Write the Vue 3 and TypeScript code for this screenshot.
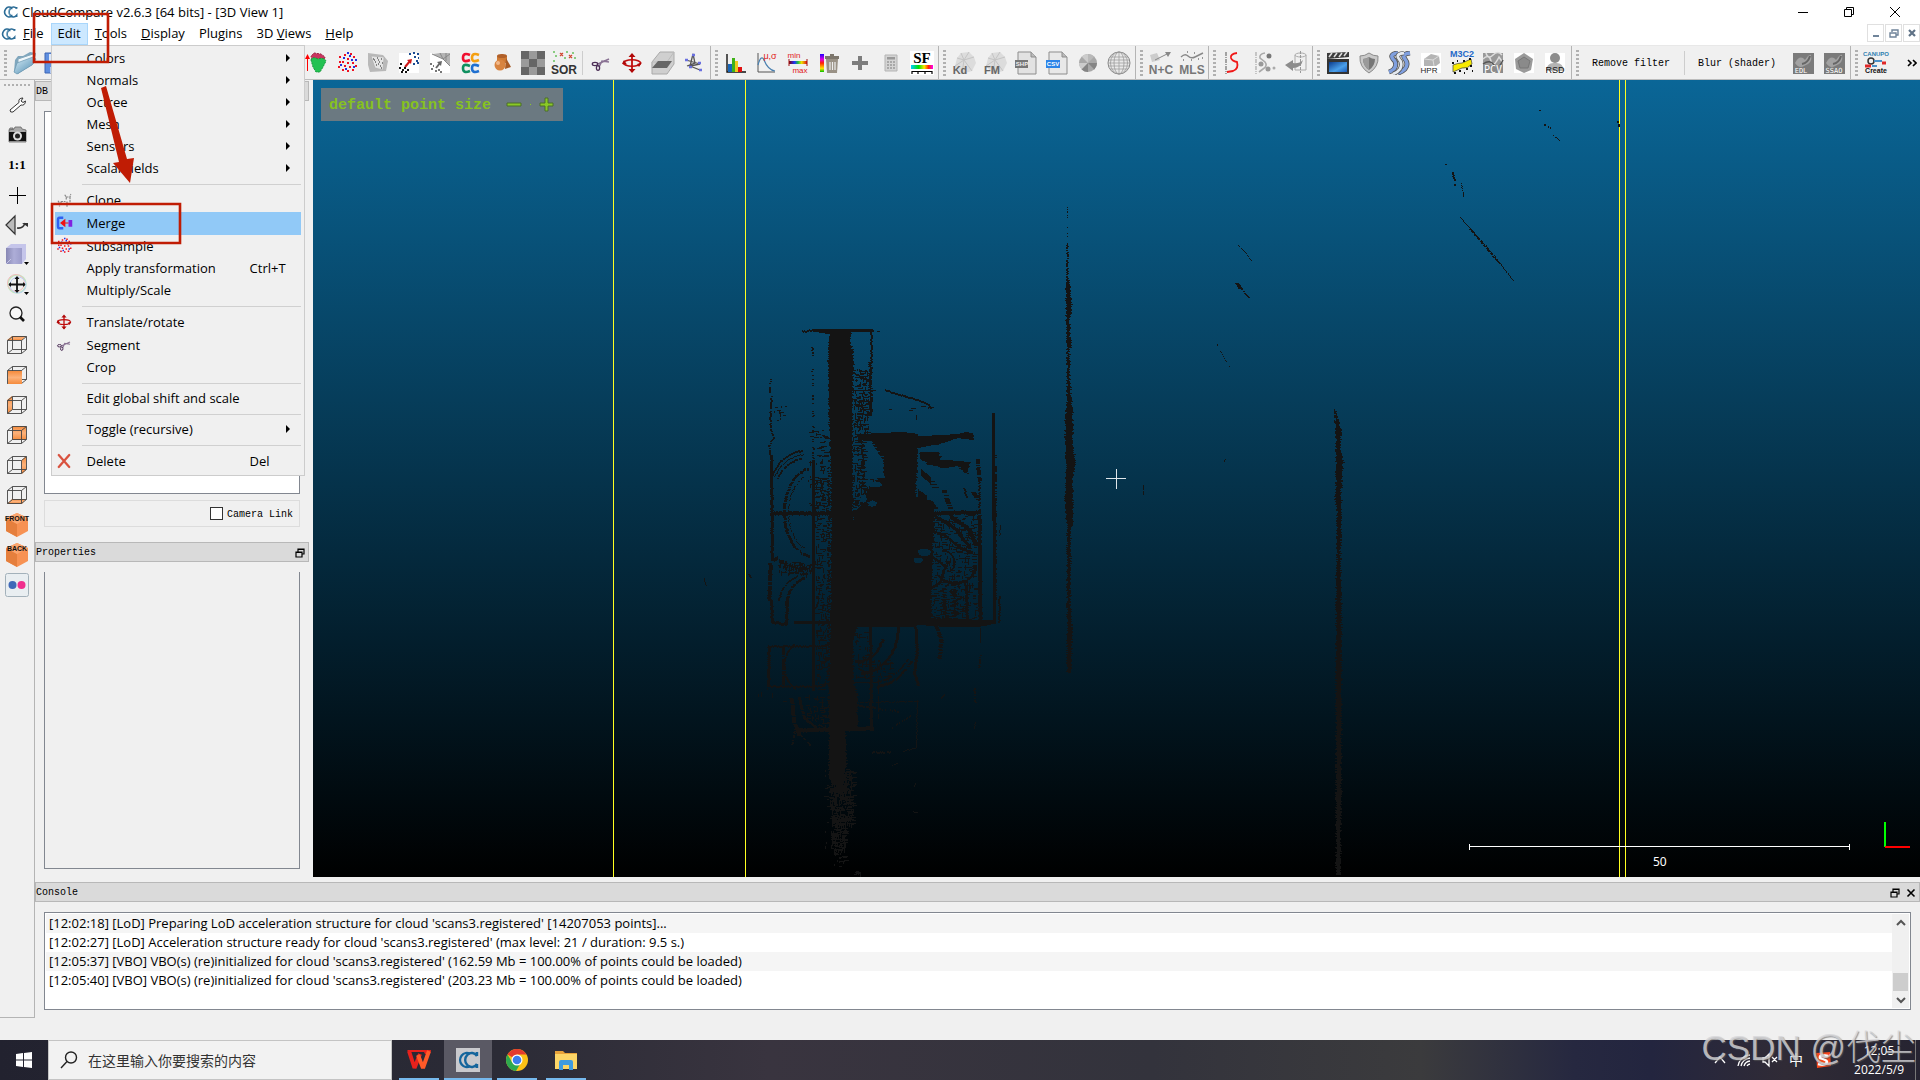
<script setup lang="ts">
interface MenuEntry {
  label?: string
  icon?: string
  shortcut?: string
  submenu?: boolean
  active?: boolean
}
interface ToolItem {
  icon?: string
  text?: string
  separator?: boolean
}
interface Caption {
  t: string
  x: number
  y: number
  size: number
  color: string
  kind?: 'serif' | 'mono' | 'thin'
}

const menus = [
  { key: 'F', rest: 'ile', before: '' },
  { key: '', rest: 'Edit', before: '' },
  { key: 'T', rest: 'ools', before: '' },
  { key: 'D', rest: 'isplay', before: '' },
  { key: '', rest: 'Plugins', before: '' },
  { key: 'V', rest: 'iews', before: '3D ' },
  { key: 'H', rest: 'elp', before: '' },
]

const editMenu: MenuEntry[] = [
  { label: 'Colors', submenu: true },
  { label: 'Normals', submenu: true },
  { label: 'Octree', submenu: true },
  { label: 'Mesh', submenu: true },
  { label: 'Sensors', submenu: true },
  { label: 'Scalar fields', submenu: true },
  {},
  { label: 'Clone', icon: 'clone' },
  { label: 'Merge', icon: 'merge', active: true },
  { label: 'Subsample', icon: 'subsample' },
  { label: 'Apply transformation', shortcut: 'Ctrl+T' },
  { label: 'Multiply/Scale' },
  {},
  { label: 'Translate/rotate', icon: 'translate' },
  { label: 'Segment', icon: 'scissors' },
  { label: 'Crop' },
  {},
  { label: 'Edit global shift and scale' },
  {},
  { label: 'Toggle (recursive)', submenu: true },
  {},
  { label: 'Delete', icon: 'delete', shortcut: 'Del' },
]

const icons = (...names: string[]): ToolItem[] =>
  names.map((n) => (n === '|' ? { separator: true } : { icon: n }))

const toolGroups: ToolItem[][] = [
  icons('open', 'save', '|', 'plus', 'delete', 'clone', '|', 'merge', 'subsample', 'mesh', 'align',
    'cone', 'subsample', 'mesh', 'align', 'distance', 'cccc', 'primitives', 'checker', 'sor', '|',
    'scissors', 'translate', 'section', 'polyline'),
  icons('histogram', 'gauss', 'minmax', 'sftrash', 'plus', 'calc', 'sf'),
  icons('kd', 'fm', 'shp', 'csv', 'pie', 'globe'),
  icons('nc', 'mls'),
  icons('scurve', 'spoints', 'unroll'),
  icons('movie', 'shield', 'srs', 'hpr', 'm3c2', 'pcv', 'pentagon', 'rsd'),
  [{ text: 'Remove filter' }, { separator: true }, { text: 'Blur (shader)' }, { icon: 'edl' }, { icon: 'ssao' }],
  icons('canupo'),
]

// Lettering drawn over the icons, centred on x with its baseline on y
const captions: Record<string, Caption[]> = {
  sor: [{ t: 'SOR', x: 12, y: 23, size: 12, color: '#333' }],
  gauss: [{ t: 'μ,σ', x: 15, y: 8, size: 9, color: '#e02020', kind: 'thin' }],
  minmax: [
    { t: 'min', x: 8, y: 7, size: 8, color: '#e02020', kind: 'thin' },
    { t: 'max', x: 14, y: 22, size: 8, color: '#e02020', kind: 'thin' },
  ],
  sf: [{ t: 'SF', x: 12, y: 12, size: 15, color: '#000', kind: 'serif' }],
  kd: [{ t: 'Kd', x: 8, y: 23, size: 11, color: '#666' }],
  fm: [{ t: 'FM', x: 9, y: 23, size: 11, color: '#666' }],
  shp: [{ t: 'SHP', x: 8, y: 15, size: 6, color: '#eee' }],
  csv: [{ t: 'CSV', x: 8, y: 15, size: 6, color: '#fff' }],
  nc: [{ t: 'N+C', x: 12, y: 23, size: 12, color: '#777' }],
  mls: [{ t: 'MLS', x: 12, y: 23, size: 12, color: '#777' }],
  hpr: [{ t: 'HPR', x: 10, y: 22, size: 8, color: '#222', kind: 'thin' }],
  m3c2: [{ t: 'M3C2', x: 12, y: 6, size: 9, color: '#2468c8' }],
  pcv: [{ t: 'PCV', x: 12, y: 22, size: 10, color: '#fff', kind: 'mono' }],
  rsd: [{ t: 'RSD', x: 12, y: 22, size: 9, color: '#111', kind: 'thin' }],
  edl: [{ t: 'EDL', x: 10, y: 22, size: 7, color: '#fff', kind: 'mono' }],
  ssao: [{ t: 'SSAO', x: 12, y: 22, size: 7, color: '#fff', kind: 'mono' }],
  canupo: [
    { t: 'CANUPO', x: 12, y: 5, size: 6, color: '#2f7fb0' },
    { t: 'Create', x: 12, y: 22, size: 7, color: '#111' },
  ],
  one: [{ t: '1:1', x: 12, y: 16, size: 13, color: '#000', kind: 'serif' }],
  front: [{ t: 'FRONT', x: 12, y: 8, size: 7, color: '#111' }],
  back: [{ t: 'BACK', x: 12, y: 8, size: 7, color: '#111' }],
}

const sideTools = [
  'wrench', 'camera', 'one', 'cross', 'view', 'cube', 'move', 'zoom',
  'v-top', 'v-front', 'v-left', 'v-back', 'v-right', 'v-bottom', 'front', 'back', 'stereo',
]

const logs = [
  "[12:02:18] [LoD] Preparing LoD acceleration structure for cloud 'scans3.registered' [14207053 points]...",
  "[12:02:27] [LoD] Acceleration structure ready for cloud 'scans3.registered' (max level: 21 / duration: 9.5 s.)",
  "[12:05:37] [VBO] VBO(s) (re)initialized for cloud 'scans3.registered' (162.59 Mb = 100.00% of points could be loaded)",
  "[12:05:40] [VBO] VBO(s) (re)initialized for cloud 'scans3.registered' (203.23 Mb = 100.00% of points could be loaded)",
]

const apps = ['wps', 'cc', 'chrome', 'explorer']

/* ---- Point cloud, rasterised to a bitmap and emitted as pixel runs ---- */
type Pt = [number, number]
const X0 = 690
const Y0 = 90
const W = 940
const H = 790
const grid = new Uint8Array(W * H)
let seed = 7
const rnd = () => {
  seed = (seed * 1103515245 + 12345) & 0x7fffffff
  return seed / 0x7fffffff
}
const plot = (x: number, y: number, v = 1) => {
  const px = Math.round(x) - X0
  const py = Math.round(y) - Y0
  if (px >= 0 && px < W && py >= 0 && py < H) grid[py * W + px] = v
}
function poly(pts: Pt[], jitter = 1) {
  const ys = pts.map((p) => p[1])
  for (let y = Math.min(...ys); y <= Math.max(...ys); y++) {
    const xs: number[] = []
    pts.forEach((a, i) => {
      const b = pts[(i + 1) % pts.length]
      const s = y + 0.4
      if (a[1] <= s !== b[1] <= s) xs.push(a[0] + ((s - a[1]) / (b[1] - a[1])) * (b[0] - a[0]))
    })
    xs.sort((a, b) => a - b)
    for (let i = 0; i + 1 < xs.length; i += 2) {
      const l = xs[i] + (rnd() - 0.5) * 2 * jitter
      const r = xs[i + 1] + (rnd() - 0.5) * 2 * jitter
      for (let x = l; x <= r; x++) plot(x, y)
    }
  }
}
function line(pts: Pt[], t = 1, density = 1, jitter = 0.5) {
  for (let i = 0; i + 1 < pts.length; i++) {
    const [ax, ay] = pts[i]
    const [bx, by] = pts[i + 1]
    const n = Math.max(Math.abs(bx - ax), Math.abs(by - ay), 1)
    const steep = Math.abs(by - ay) > Math.abs(bx - ax)
    for (let k = 0; k <= n; k++) {
      if (rnd() > density) continue
      const j = (rnd() - 0.5) * 2 * jitter
      for (let w = 0; w < t; w++) {
        const o = w - (t - 1) / 2 + j
        plot(ax + ((bx - ax) * k) / n + (steep ? o : 0), ay + ((by - ay) * k) / n + (steep ? 0 : o))
      }
    }
  }
}
function arc(cx: number, cy: number, rx: number, ry: number, from: number, to: number, t = 1, density = 1) {
  const pts: Pt[] = []
  for (let a = from; a <= to; a += 6) {
    const r = (a * Math.PI) / 180
    pts.push([cx + rx * Math.cos(r), cy + ry * Math.sin(r)])
  }
  line(pts, t, density)
}
function scatter(x0: number, y0: number, x1: number, y1: number, density: number) {
  const n = (x1 - x0) * (y1 - y0) * density * 0.4
  for (let i = 0; i < n; i++) {
    const x = x0 + rnd() * (x1 - x0)
    const y = y0 + rnd() * (y1 - y0)
    const len = 1 + rnd() * 4
    const vertical = rnd() > 0.6
    for (let k = 0; k < len; k++) plot(x + (vertical ? 0 : k), y + (vertical ? k : 0))
  }
}
function hole(cx: number, cy: number, rx: number, ry: number) {
  for (let y = -ry; y <= ry; y++) {
    const w = rx * Math.sqrt(1 - (y / ry) ** 2) + rnd() * 2 - 1
    for (let x = -w; x <= w; x++) plot(cx + x, cy + y, 0)
  }
}

// main shaft and roof
line([[802, 331], [815, 330]], 2)
poly([[812, 329], [873, 329], [873, 332], [851, 332], [830, 334], [815, 332]], 1)
line([[877, 331], [879, 331]])
poly([[830, 330], [851, 330], [850, 342], [853, 352], [852, 440], [853, 512], [855, 600], [857, 626], [853, 642], [853, 680], [857, 695], [857, 727], [829, 729], [829, 690], [831, 600], [831, 480], [829, 420], [828, 350]], 1)
poly([[829, 729], [845, 729], [846, 765], [838, 790], [829, 775]], 1)
scatter(829, 765, 846, 800, 0.7)
scatter(830, 770, 853, 825, 0.6)
scatter(831, 815, 845, 850, 0.8)
scatter(833, 850, 845, 866, 0.25)
scatter(824, 770, 832, 850, 0.08)
scatter(852, 871, 862, 874, 0.6)
line([[871, 332], [871, 362]], 2)
line([[870, 362], [870, 415]], 3, 1, 1)
scatter(853, 368, 870, 400, 0.3)
scatter(853, 398, 868, 438, 0.5)
line([[854, 390], [875, 390]], 1, 0.8)
line([[854, 373], [868, 380]], 2)
line([[885, 390], [905, 396], [927, 403], [931, 408]], 2)
scatter(880, 404, 932, 416, 0.03)

// left wing
line([[771, 378], [769, 392]], 2, 0.8)
line([[771, 396], [770, 425], [773, 438], [769, 445], [770, 455]], 2, 0.9)
scatter(771, 405, 785, 420, 0.12)
line([[771, 455], [772, 560]], 3)
line([[770, 563], [769, 600]], 4, 0.9)
line([[812, 344], [813, 460]], 2, 0.35)
scatter(808, 430, 825, 512, 0.16)
line([[813, 460], [813, 690]], 3)
scatter(815, 478, 830, 600, 0.26)
scatter(815, 600, 830, 690, 0.3)
line([[828, 460], [828, 700]], 2, 0.5)
arc(812, 512, 28, 44, 96, 264, 3, 0.9)
arc(812, 512, 24, 38, 110, 250, 1, 0.7)
arc(806, 494, 38, 44, 206, 266, 2)
arc(806, 494, 35, 40, 206, 266, 1)
arc(806, 494, 32, 36, 206, 266, 2, 0.8)
line([[771, 513], [855, 513]], 4)
line([[772, 557], [790, 566], [812, 570]], 4, 0.8, 2)
scatter(778, 562, 812, 574, 0.4)
arc(812, 606, 34, 34, 190, 262, 2, 0.8)
arc(812, 606, 26, 30, 180, 262, 3, 0.8)
line([[771, 600], [772, 622], [786, 624], [787, 600]], 3)
line([[794, 622], [830, 622]], 3)
line([[768, 646], [825, 646]], 2)
line([[769, 646], [768, 686]], 3)
line([[768, 686], [822, 686]], 2)
arc(806, 666, 22, 26, 120, 240, 2, 0.9)
line([[783, 646], [783, 684]], 3, 0.8)
line([[791, 697], [794, 722], [799, 735]], 4, 0.9)
line([[799, 697], [804, 718], [818, 729]], 3, 0.9)
arc(835, 690, 30, 40, 110, 160, 1, 0.6)
line([[796, 730], [873, 728]], 4)
line([[795, 728], [792, 744]], 2, 0.7)
line([[800, 734], [810, 745]], 2, 0.7)
scatter(804, 695, 829, 725, 0.16)
scatter(748, 685, 790, 702, 0.02)

// central block
poly([[858, 434], [900, 432], [915, 433], [918, 436], [940, 435], [957, 434], [966, 432], [973, 433], [974, 440], [957, 438], [940, 444], [917, 448], [917, 470], [915, 496], [926, 500], [934, 512], [931, 600], [932, 620], [914, 627], [853, 627], [853, 512], [862, 505], [872, 482], [884, 478], [883, 456], [872, 441], [858, 440]], 1)
scatter(853, 436, 864, 512, 0.5)
scatter(860, 478, 884, 512, 0.5)
hole(872, 503, 4, 3)
hole(863, 498, 3, 4)
hole(875, 484, 6, 3)
hole(924, 552, 6, 4)
hole(918, 560, 4, 3)
line([[871, 440], [884, 460]], 3, 0.7)
poly([[920, 452], [939, 452], [941, 458], [921, 461]], 1)
poly([[924, 458], [970, 462], [967, 475], [958, 466], [944, 468], [925, 464]], 2)
line([[921, 472], [930, 480], [936, 488]], 7, 0.9)
line([[918, 494], [926, 500], [933, 508]], 10, 0.9)
line([[944, 490], [950, 508]], 5, 0.8)
line([[964, 488], [966, 497]], 2)
line([[973, 492], [979, 501]], 5, 0.8)
line([[977, 457], [979, 480]], 4, 0.7)
line([[979, 480], [979, 512]], 2, 0.7)
line([[925, 513], [980, 512]], 4)
line([[979, 515], [980, 622]], 4)
scatter(932, 515, 976, 545, 0.22)
scatter(932, 545, 976, 620, 0.2)
line([[935, 516], [955, 528], [970, 548]], 4)
line([[950, 516], [968, 528], [976, 545]], 5)
line([[931, 530], [945, 535], [960, 548], [972, 552]], 3)
arc(955, 565, 20, 18, 0, 150, 3)
arc(942, 562, 12, 12, 270, 400, 2)
line([[932, 556], [945, 566], [940, 582], [930, 588]], 3)
line([[942, 590], [946, 620]], 4, 0.9, 2)
line([[953, 588], [955, 618]], 5, 0.8, 2)
line([[966, 586], [967, 620]], 3)
poly([[918, 618], [995, 620], [995, 624], [978, 627], [948, 627], [918, 625]], 2)
line([[993, 413], [993, 520]], 3, 1, 0.5)
line([[995, 455], [995, 600]], 3, 0.5)
line([[994, 500], [994, 623]], 3)
line([[1000, 525], [999, 535]], 1)
line([[999, 596], [999, 622]], 2)

// lower rings
line([[870, 627], [871, 728]], 3)
arc(860, 627, 38, 46, 0, 90, 3)
arc(858, 627, 26, 34, 20, 100, 3)
arc(866, 634, 52, 54, 30, 78, 3, 0.9)
arc(866, 634, 48, 49, 30, 80, 2, 0.8)
scatter(855, 660, 890, 678, 0.3)
scatter(855, 630, 870, 660, 0.15)
line([[915, 627], [917, 650], [914, 672], [918, 685]], 3)
line([[917, 700], [916, 747], [903, 751]], 1)
line([[872, 752], [890, 752]], 2, 0.8)
line([[857, 702], [918, 701]], 1, 0.7)
line([[857, 705], [898, 711]], 2, 0.7)
line([[878, 678], [878, 718]], 1, 0.8)
line([[854, 682], [878, 682]], 1)
line([[892, 727], [910, 716]], 2, 0.6)
line([[936, 625], [941, 640], [939, 658]], 4, 0.8)
line([[980, 628], [980, 642]], 1)
line([[980, 655], [979, 668]], 2, 0.6)
line([[974, 688], [975, 702]], 2, 0.6)
line([[975, 722], [974, 728]], 1)
line([[941, 697], [944, 695]], 2)
line([[887, 768], [897, 763]], 1, 0.5)
line([[914, 786], [915, 783]], 1)
line([[913, 811], [917, 812]], 1)

// detached walls
line([[1067, 207], [1067, 250]], 1, 0.35)
line([[1067, 245], [1067, 300]], 2, 0.85, 1)
poly([[1066, 280], [1069, 280], [1071, 300], [1071, 317], [1069, 318], [1070, 335], [1071, 346], [1069, 350], [1070, 385], [1072, 412], [1073, 430], [1072, 440], [1075, 460], [1072, 480], [1073, 512], [1072, 526], [1070, 530], [1070, 600], [1072, 640], [1071, 673], [1067, 673], [1067, 600], [1067, 526], [1065, 500], [1066, 470], [1065, 420], [1067, 400], [1067, 350], [1066, 317]], 1)
line([[1334, 409], [1334, 426]], 1, 0.6)
poly([[1335, 411], [1338, 420], [1341, 432], [1340, 450], [1343, 462], [1341, 490], [1341, 540], [1340, 548], [1341, 600], [1341, 700], [1341, 780], [1340, 875], [1336, 875], [1336, 780], [1336, 700], [1336, 600], [1337, 548], [1337, 510], [1335, 500], [1336, 480], [1336, 430]], 1)

// stray returns
line([[1460, 217], [1487, 247], [1513, 280]], 1, 1)
line([[1470, 229], [1500, 264]], 2, 0.8)
line([[1452, 171], [1455, 185]], 2, 0.8)
line([[1461, 183], [1463, 196]], 1, 0.8)
line([[1445, 164], [1446, 164]])
line([[1544, 124], [1552, 128]], 2, 0.6)
line([[1553, 135], [1559, 140]], 1, 0.7)
line([[1539, 110], [1540, 110]])
line([[1617, 120], [1619, 126]], 2, 0.8)
line([[1238, 245], [1246, 253], [1251, 260]], 1, 0.9)
line([[1237, 283], [1240, 288]], 4, 0.9)
line([[1240, 287], [1248, 297]], 2, 0.7)
line([[1217, 344], [1229, 366]], 1, 0.15)
line([[1143, 485], [1143, 494]], 1, 0.8)
line([[1224, 461], [1225, 459]], 1)
line([[749, 574], [750, 577]], 2)
line([[704, 578], [706, 585]], 1)

let cloud = ''
for (let y = 0; y < H; y++) {
  for (let x = 0; x < W; x++) {
    if (!grid[y * W + x]) continue
    const start = x
    while (x < W && grid[y * W + x]) x++
    cloud += `M${start + X0} ${y + Y0}h${x - start}v1h${start - x}z`
  }
}
</script>

<template>
  <div class="desktop">
    <svg class="defs" aria-hidden="true">
      <defs>
        <linearGradient id="g-blue" x1="0" y1="0" x2="1" y2="1"><stop offset="0" stop-color="#d8eef8" /><stop offset="1" stop-color="#4a87ad" /></linearGradient>
        <linearGradient id="g-scr" x1="0" y1="0" x2="1" y2="1"><stop offset="0" stop-color="#0b3b8c" /><stop offset="0.6" stop-color="#4aa0ea" /><stop offset="1" stop-color="#1a5ab8" /></linearGradient>
        <linearGradient id="g-rain"><stop offset="0" stop-color="#00d0ff" /><stop offset="0.35" stop-color="#00e000" /><stop offset="0.6" stop-color="#ffe600" /><stop offset="0.8" stop-color="#ff2000" /><stop offset="1" stop-color="#ff00ff" /></linearGradient>
        <linearGradient id="g-rainv" x1="0" y1="0" x2="0" y2="1"><stop offset="0" stop-color="#2000ff" /><stop offset="0.3" stop-color="#e000e0" /><stop offset="0.5" stop-color="#ff2000" /><stop offset="0.8" stop-color="#ffe600" /><stop offset="1" stop-color="#00c000" /></linearGradient>
        <linearGradient id="g-heat"><stop offset="0" stop-color="#800000" /><stop offset="0.3" stop-color="#2030ff" /><stop offset="0.5" stop-color="#20c040" /><stop offset="0.7" stop-color="#f0e000" /><stop offset="1" stop-color="#e01010" /></linearGradient>
        <linearGradient id="g-cube"><stop offset="0" stop-color="#7c7caa" /><stop offset="0.5" stop-color="#a9a9d4" /><stop offset="1" stop-color="#9494c4" /></linearGradient>
        <linearGradient id="g-face" x1="0" y1="0" x2="0" y2="1"><stop offset="0" stop-color="#f58b3c" /><stop offset="0.5" stop-color="#fbb17a" /><stop offset="1" stop-color="#f58b3c" /></linearGradient>
      </defs>
      <symbol id="i-ccmark" viewBox="0 0 24 24"><g fill="none" stroke="#2b6c96" stroke-width="2.4"><path d="M14.500 6A6.500 7.500 0 1 0 14.500 18" /><path d="M22 7V4.500M22 7A6.500 7.500 0 1 0 22 17V19.500M14.500 4V8M14.500 16V20" /></g><path d="M12.500 6A7 8 0 0 0 12.500 18" fill="none" stroke="#9cc4da" stroke-width="1" /></symbol>
      <symbol id="i-open" viewBox="0 0 24 24"><path d="M2 9L5 5L10 5L17 1L23 2L21 12L5 23L1 21Z" fill="#7fa6bd" /><path d="M5 8L20 3L22 3L20 13L5 22Z" fill="#eef6fa" stroke="#86a8bb" /><path d="M4 12L20 6L23 8L19 14L4 23L1 21Z" fill="url(#g-blue)" stroke="#6c98b2" stroke-width=".7" /></symbol>
      <symbol id="i-save" viewBox="0 0 24 24"><path d="M1 2H22V22H1Z" fill="#5f8fe0" stroke="#3c64b4" /><path d="M5 3H18V12H5Z" fill="#dce8fa" /><path d="M6 16H17V22H6Z" fill="#b5caf0" /></symbol>
      <symbol id="i-cone" viewBox="0 0 24 24"><path d="M3.500 20V5" stroke="red" /><path d="M1 8L3.500 3L6 8Z" fill="red" /><path d="M10 2L17 3L21 6L20 9H8L7 5Z" fill="#c9355f" stroke="#a02848" stroke-dasharray="2 1" /><path d="M7 9Q8 5 14 8Q20 6 22 10L19 16L16 21H12L9 16Z" fill="#23c152" stroke="#159a3b" stroke-dasharray="2 1" /></symbol>
      <symbol id="i-subsample" viewBox="0 0 24 24"><path d="M4 6h2M9 4h2M12 8h2M18 6h2M7 11h2M12 12h2M3 16h2M9 15h2M17 12h2M14 16h2M7 19h2M12 20h2M17 19h2M20 15h2M4 11h2M15 3h2" stroke="#f01020" stroke-width="2" /><path d="M8 7h2M14 5h2M20 9h2M10 18h2M18 16h2M5 14h2M16 9h2M12 2h2" stroke="#2430e0" stroke-width="2" /></symbol>
      <symbol id="i-mesh" viewBox="0 0 24 24"><path d="M2 2L17 4L22 10L20 20L4 21L2 14Z" fill="#b9b9b9" /><path d="M5 5L18 6L17 19L9 17Z" fill="#e4e4e4" stroke="#aaa" stroke-width=".6" /><path d="M7 8h1M11 7h1M15 8h1M9 11h1M13 11h1M16 12h1M10 14h1M14 15h1M8 9h1M12 13h1M15 17h1M12 9h1" stroke="#222" stroke-width="1.200" /></symbol>
      <symbol id="i-align" viewBox="0 0 24 24"><path d="M2 2H22V22H2Z" fill="#fff" /><path d="M8 16L13 10" stroke="#d01818" stroke-width="2" /><path d="M10 9L15 8L14 13Z" fill="#d01818" /><path d="M12 3h2M16 2h2M20 3h2M17 6h2M21 7h1M19 10h2M16 13h2M20 12h2" stroke="#1b4a90" stroke-width="2" /><path d="M3 13h2M2 17h2M5 19h2M8 21h2M4 21h2M7 17h2M10 19h2" stroke="#111" stroke-width="2" /></symbol>
      <symbol id="i-distance" viewBox="0 0 24 24"><path d="M2 2H22V22H2Z" fill="#fff" /><path d="M4 3L12 2H22V15L15 8Z" fill="#b4b4b4" /><path d="M4 3L15 8L22 15M12 2L15 8L22 3M18 2V10" stroke="#888" fill="none" /><path d="M8 17L12 12" stroke="#666" stroke-width="2" /><path d="M9 11L14 10L13 15Z" fill="#666" /><path d="M2 13h2M3 18h2M7 20h2M5 15h1M10 19h2M12 21h2" stroke="#777" stroke-width="2" /></symbol>
      <symbol id="i-cccc" viewBox="0 0 24 24"><g fill="none" stroke-width="2.600"><path d="M11 4Q4 1 4 7Q4 12 11 9" stroke="#f01030" /><path d="M20 4Q13 1 13 7Q13 12 20 9" stroke="#f5a010" /><path d="M11 15Q4 12 4 17Q4 23 11 20" stroke="#0f9060" /><path d="M20 15Q13 12 13 17Q13 23 20 20" stroke="#2070d0" /></g></symbol>
      <symbol id="i-primitives" viewBox="0 0 24 24"><path d="M7 5L12 3L17 5V12H7Z" fill="#cf7a34" /><ellipse cx="12" cy="5" rx="5" ry="2" fill="#b0602a" /><path d="M16 7L21 16L15 18Z" fill="#a85a24" /><circle cx="10" cy="14" r="5.500" fill="#d88440" /><circle cx="8" cy="12" r="2" fill="#f3b888" /></symbol>
      <symbol id="i-checker" viewBox="0 0 24 24"><path d="M0 0H24V24H0Z" fill="#9a9a9a" /><path d="M0 0H8V8H0ZM16 0H24V8H16ZM8 8H16V16H8ZM0 16H8V24H0ZM16 16H24V24H16Z" fill="#666" /></symbol>
      <symbol id="i-sor" viewBox="0 0 24 24"><path d="M1 1h2M14 1h2M20 2h2M3 5h2M12 7h2M22 7h2M1 10h2" stroke="#67c05c" stroke-width="1.600" /><path d="M8 2l3 3m0-3l-3 3M17 4l3 3m0-3l-3 3" stroke="#cf4a33" stroke-width="1.300" /></symbol>
      <symbol id="i-scissors" viewBox="0 0 24 24"><path d="M9 13L20 8M10 16L13 10L20 11" stroke="#8a7394" stroke-width="1.600" fill="none" /><ellipse cx="6" cy="13" rx="2.700" ry="1.600" fill="none" stroke="#4b2d55" stroke-width="1.300" /><ellipse cx="9" cy="17" rx="1.600" ry="2.300" fill="none" stroke="#4b2d55" stroke-width="1.300" /></symbol>
      <symbol id="i-translate" viewBox="0 0 24 24"><ellipse cx="12" cy="12" rx="8.500" ry="3.300" fill="none" stroke="#c00c0c" stroke-width="1.600" /><path d="M12 4V21" stroke="#c00c0c" stroke-width="1.800" /><path d="M8.500 6L12 2L15.500 6ZM8.500 18L12 22L15.500 18ZM4 9L2 13L7 13.500ZM17 13L22 11.500L19 16Z" fill="#b00808" /></symbol>
      <symbol id="i-section" viewBox="0 0 24 24"><path d="M1 11L9 1H23V13L16 23H1Z" fill="#cfcfcf" stroke="#aaa" /><path d="M1 17V11H16L23 1" fill="none" stroke="#bbb" /><path d="M1 17L7 10H21L16 17Z" fill="#666" /></symbol>
      <symbol id="i-polyline" viewBox="0 0 24 24"><path d="M4 9L18 13L8 15L18 19M8 15L11 3L13 12L5 15" fill="none" stroke="#555" stroke-width="1.300" /><path d="M3 9h3M10 4h3M16 12h3M17 19h3M7 16h3" stroke="#6a70e0" stroke-width="2.600" /></symbol>
      <symbol id="i-histogram" viewBox="0 0 24 24"><path d="M3 3V21H22" fill="none" stroke="#111" stroke-width="1.400" /><path d="M4 13H8V21H4Z" fill="#1765b8" /><path d="M8 7H11V21H8Z" fill="#3fb218" /><path d="M11 10H14V21H11Z" fill="#f0c81c" /><path d="M14 16H18V21H14Z" fill="#e01010" /></symbol>
      <symbol id="i-gauss" viewBox="0 0 24 24"><path d="M3 2V21H20" fill="none" stroke="#555" /><path d="M3 14Q6 3 9 9Q13 19 20 20" fill="none" stroke="#4a80b0" stroke-width="1.200" /></symbol>
      <symbol id="i-minmax" viewBox="0 0 24 24"><path d="M3 10h18v3H3Z" fill="url(#g-heat)" /><path d="M3 8v7M21 8v7" stroke="#a01010" /></symbol>
      <symbol id="i-sftrash" viewBox="0 0 24 24"><path d="M3 3H7V21H3Z" fill="url(#g-rainv)" /><path d="M9 8H21L20 22H10Z" fill="#9a9286" /><path d="M8 5H22V8H8Z" fill="#7d766c" /><path d="M13 3H17V5H13Z" fill="#7d766c" /><path d="M13 11V19M15.500 11V19M18 11V19" stroke="#eee" stroke-width="1.200" /></symbol>
      <symbol id="i-plus" viewBox="0 0 24 24"><path d="M12 5V19M4 12H20" stroke="#7d7d7d" stroke-width="4" /></symbol>
      <symbol id="i-calc" viewBox="0 0 24 24"><path d="M6 4H18V20H6Z" fill="#d4d4d4" stroke="#b4b4b4" /><path d="M8 6H16V8.500H8Z" fill="#999" /><path d="M8 11h8M8 14h8M8 17h8" stroke="#999" stroke-width="1.600" stroke-dasharray="2 1" /></symbol>
      <symbol id="i-sf" viewBox="0 0 24 24"><path d="M0 0H24V24H0Z" fill="#fff" /><path d="M1 14H23V18H1Z" fill="url(#g-rain)" /><path d="M2 23V20.500H22V23M8 20V23M15 20V23" fill="none" stroke="#000" stroke-width="1.200" /></symbol>
      <symbol id="i-rock" viewBox="0 0 24 24"><path d="M5 7L9 2L17 1L22 6L24 12L20 20L10 23L3 15Z" fill="#dcdcdc" /><path d="M5 7L12 9L17 1M12 9L10 23M12 9L22 6M12 9L20 20M3 15L12 9M9 2L12 9" fill="none" stroke="#c4c4c4" /></symbol>
      <symbol id="i-shp" viewBox="0 0 24 24"><path d="M4 1H17L22 6V23H4Z" fill="#e2e2e2" stroke="#8d8d8d" /><path d="M17 1V6H22" fill="#bbb" stroke="#8d8d8d" /><path d="M1 9H14V17H1Z" fill="#777" /></symbol>
      <symbol id="i-csv" viewBox="0 0 24 24"><path d="M4 1H17L22 6V23H4Z" fill="#e8e8e8" stroke="#8d8d8d" /><path d="M17 1V6H22" fill="#bbb" stroke="#8d8d8d" /><path d="M1 9H15V17H1Z" fill="#2d84e8" /></symbol>
      <symbol id="i-pie" viewBox="0 0 24 24"><circle cx="12" cy="12" r="9" fill="#a8a8a8" /><path d="M12 12L12 3A9 9 0 0 0 5.600 5.600ZM12 12L3 12A9 9 0 0 0 5.600 18.400Z" fill="#ccc" /><path d="M12 12L21 12A9 9 0 0 1 18.400 18.400ZM12 12V21A9 9 0 0 1 5.600 18.400Z" fill="#858585" /><path d="M12 12L18.400 5.600A9 9 0 0 0 12 3Z" fill="#b9b9b9" /></symbol>
      <symbol id="i-globe" viewBox="0 0 24 24"><circle cx="12" cy="12" r="11" fill="#e9e9e9" stroke="#888" /><path d="M1 12H23M12 1V23M3 6H21M3 18H21M2 9H22M2 15H22" stroke="#999" stroke-width=".7" /><ellipse cx="12" cy="12" rx="5" ry="11" fill="none" stroke="#999" stroke-width=".8" /><ellipse cx="12" cy="12" rx="8.500" ry="11" fill="none" stroke="#999" stroke-width=".8" /></symbol>
      <symbol id="i-nc" viewBox="0 0 24 24"><path d="M1 4L8 2L11 9L3 11Z" fill="#ccc" /><path d="M6 9L18 3" stroke="#888" /><path d="M16 1L22 1L19 6Z" fill="#888" /></symbol>
      <symbol id="i-mls" viewBox="0 0 24 24"><path d="M1 6Q5 2 8 5T15 6T23 2" fill="none" stroke="#888" stroke-width="1.400" /><path d="M3 9h1M7 1h1M11 9h1M18 8h1M22 7h1M14 2h1" stroke="#777" stroke-width="1.500" /></symbol>
      <symbol id="i-scurve" viewBox="0 0 24 24"><path d="M4 1V23" stroke="#555" stroke-dasharray="4 1 1 1" /><path d="M15 2Q8 3 9 7Q10 10 15 11Q17 18 11 20L5 21" fill="none" stroke="#f01818" stroke-width="1.800" /></symbol>
      <symbol id="i-spoints" viewBox="0 0 24 24"><path d="M3 1V23" stroke="#999" stroke-dasharray="4 1 1 1" /><path d="M12 2Q6 3 7 7L12 11Q15 15 10 18L6 21" fill="none" stroke="#aaa" stroke-width="1.600" /><circle cx="16" cy="5" r="2.500" fill="#777" /><circle cx="8" cy="13" r="2.500" fill="#999" /><circle cx="15" cy="18" r="2.500" fill="#999" /><circle cx="21" cy="17" r="1.500" fill="#aaa" /></symbol>
      <symbol id="i-unroll" viewBox="0 0 24 24"><path d="M11 4V19H22V4" fill="none" stroke="#aaa" /><ellipse cx="16.500" cy="4" rx="5.500" ry="2" fill="none" stroke="#aaa" /><path d="M16.500 0V22" stroke="#999" stroke-dasharray="3 1" /><path d="M1 14L9 9V12Q15 13 19 9Q17 17 9 17V20Z" fill="#8c8c8c" /></symbol>
      <symbol id="i-movie" viewBox="0 0 24 24"><path d="M1 2L23 1V6L1 8Z" fill="#3c3c3c" /><path d="M3 6l3-4M8 6l3-4M13 6l3-4M18 5l3-4" stroke="#ddd" stroke-width="1.600" /><path d="M1 8H23V23H1Z" fill="#333" /><path d="M3 11H21V21H3Z" fill="url(#g-scr)" /></symbol>
      <symbol id="i-shield" viewBox="0 0 24 24"><path d="M12 2Q16 5 21 5Q22 16 12 22Q2 16 3 5Q8 5 12 2Z" fill="#c9c9c9" stroke="#8a8a8a" /><path d="M12 6Q15 8 18 8Q18 15 12 19Q6 15 6 8Q9 8 12 6Z" fill="#777" /><path d="M12 6Q9 8 6 8Q6 15 12 19Z" fill="#9a9a9a" /></symbol>
      <symbol id="i-srs" viewBox="0 0 24 24"><g fill="none"><path d="M10 2Q1 3 5 8Q10 12 6 18Q4 20 1 21M22 2Q13 3 17 8Q21 13 17 18Q14 21 10 22" stroke="#555" stroke-width="5" /><path d="M10 2Q1 3 5 8Q10 12 6 18Q4 20 1 21M22 2Q13 3 17 8Q21 13 17 18Q14 21 10 22" stroke="#7f9fdf" stroke-width="3.400" /><path d="M16 2Q7 3 11 8Q15 12 12 18Q10 21 5 23" stroke="#555" stroke-width="4.400" /><path d="M16 2Q7 3 11 8Q15 12 12 18Q10 21 5 23" stroke="#e4e9f0" stroke-width="2.800" /></g></symbol>
      <symbol id="i-hpr" viewBox="0 0 24 24"><path d="M2 2H22V22H2Z" fill="#fff" /><path d="M5 8L12 3L20 5L21 12L17 15H5Z" fill="#b4b4b4" /><path d="M5 8L14 9L20 5M14 9L15 15" fill="none" stroke="#ddd" /></symbol>
      <symbol id="i-m3c2" viewBox="0 0 24 24"><path d="M3 14Q8 12 12 12L21 8L22 13Q18 18 12 17L3 21Z" fill="#f7ea00" stroke="#554" stroke-width=".8" /><path d="M2 12h2M7 10h1M13 10h2M19 8h2M4 22h2M9 20h2M16 18h2M20 15h2M22 20h1M14 22h1" stroke="#111" stroke-width="2" /></symbol>
      <symbol id="i-pcv" viewBox="0 0 24 24"><path d="M2 2H22V22H2Z" fill="#999" /><path d="M2 8Q8 2 10 10T18 6L22 12M5 2Q7 9 12 4T21 4" fill="none" stroke="#ddd" stroke-width="1.500" /><path d="M2 13Q9 8 13 14T22 9" fill="none" stroke="#555" stroke-width="1.500" /><path d="M2 14H22V22H2Z" fill="#8a8a8a" /></symbol>
      <symbol id="i-pentagon" viewBox="0 0 24 24"><path d="M2 2H22V22H2Z" fill="#fff" /><path d="M12 2L21 8L19 19L12 22L4 18L3 8Z" fill="#9a9a9a" /><path d="M12 6L18 10L16 17H8L6 10Z" fill="#8a8a8a" stroke="#777" /></symbol>
      <symbol id="i-rsd" viewBox="0 0 24 24"><path d="M2 2H22V22H2Z" fill="#fff" /><circle cx="12" cy="7" r="5" fill="#8c8c8c" /><path d="M3 20Q4 11 12 12Q20 11 21 20Z" fill="#b4b4b4" /></symbol>
      <symbol id="i-shade" viewBox="0 0 24 24"><path d="M2 2H23V23H2Z" fill="#7b7b7b" /><path d="M4 12Q9 3 14 9Q18 3 20 4Q22 12 13 15Q8 18 4 12Z" fill="#a2a2a2" /><path d="M11 13Q17 12 19 5" fill="none" stroke="#666" stroke-width="2" /></symbol>
      <symbol id="i-canupo" viewBox="0 0 24 24"><circle cx="7" cy="10" r="3" fill="none" stroke="#333" stroke-width="1.500" /><path d="M10 10H18M8 15h5" stroke="#4a90c8" stroke-width="2" /><path d="M1 15h6M18 12h4" stroke="#e02828" stroke-width="3" /></symbol>

      <symbol id="i-clone" viewBox="0 0 24 24"><path d="M4 13L6 16V21M8 14V18M8 14H14M13 5L15 8V12M15 8H20L21 4M20 8L20 18M16 14V21" fill="none" stroke="#888" stroke-width="1.600" stroke-dasharray="3 1" /></symbol>
      <symbol id="i-merge" viewBox="0 0 24 24"><path d="M11 5H6Q4 5 4 8V16Q4 19 6 19H11" fill="none" stroke="#3060f0" stroke-width="3.400" /><path d="M18 8H23V17H18Z" fill="#8020e0" /><path d="M8 12L13 8V16ZM12 12H18" fill="#f01010" stroke="#f01010" stroke-width="1.600" /></symbol>
      <symbol id="i-delete" viewBox="0 0 24 24"><path d="M5 4L19 20M19 4L5 20" stroke="#d9523f" stroke-width="3" stroke-linecap="round" /></symbol>

      <symbol id="i-wrench" viewBox="0 0 24 24"><path d="M5 17L14 9.500Q13 5 18 5L16 8L18 9.500L20.500 8Q20 13 16 12L8 19Q5 20 5 17Z" fill="#fff" stroke="#333" /></symbol>
      <symbol id="i-camera" viewBox="0 0 24 24"><path d="M4 7L5 5H8V7M9 6L10 4H16L17 6L21 7V19H4V7Z" fill="#aaa" stroke="#666" stroke-width=".8" /><path d="M4 9H21V18H4Z" fill="#111" /><circle cx="12.500" cy="13" r="4.500" fill="#ddd" /><circle cx="12.500" cy="13" r="2.500" fill="#222" /></symbol>
      <symbol id="i-cross" viewBox="0 0 24 24"><path d="M12.500 4V21M4 12.500H21" stroke="#000" /></symbol>
      <symbol id="i-view" viewBox="0 0 24 24"><path d="M1 12L10 3V21Z" fill="#bbb" stroke="#333" stroke-width="1.200" /><path d="M12 15Q18 16 20 10" fill="none" stroke="#333" stroke-width="1.600" /><path d="M17 10H23V14Z" fill="#333" /></symbol>
      <symbol id="i-cube" viewBox="0 0 24 24"><path d="M1 5L6 1H21V16L17 21H1Z" fill="#c5c5ea" /><path d="M1 5H17V21H1Z" fill="url(#g-cube)" opacity=".85" /><path d="M6 16L1 21" stroke="#c6c6e6" fill="none" /><path d="M19 19H24L21.500 22Z" fill="#000" /></symbol>
      <symbol id="i-move" viewBox="0 0 24 24"><circle cx="12" cy="11" r="9" fill="none" stroke="#bfe8c0" stroke-width="1.500" /><circle cx="11" cy="10" r="8.500" fill="none" stroke="#f3bcbc" /><circle cx="13" cy="12" r="8" fill="none" stroke="#bcd0f5" /><path d="M12 4V19M4 11.500H20" stroke="#111" stroke-width="1.800" /><path d="M9.500 6L12 3L14.500 6ZM9.500 17L12 20L14.500 17ZM6 9L3.500 11.500L6 14ZM18 9L20.500 11.500L18 14Z" fill="#111" /><path d="M19 19H24L21.500 22Z" fill="#000" /></symbol>
      <symbol id="i-zoom" viewBox="0 0 24 24"><circle cx="11" cy="10" r="6" fill="#f8f8f8" stroke="#222" stroke-width="1.300" /><path d="M15 14L19 18" stroke="#111" stroke-width="2.600" /></symbol>
      <symbol id="i-wire" viewBox="0 0 24 24"><path d="M2.500 7.500H16.500V20.500H2.500ZM7.500 3.500H21.500V16.500H16.500M7.500 3.500L2.500 7.500M21.500 3.500L16.500 7.500M21.500 16.500L16.500 20.500M7.500 3.500V16.500H16.500M7.500 16.500L2.500 20.500" fill="none" stroke="#444" stroke-width=".9" /></symbol>
      <symbol id="i-v-top" viewBox="0 0 24 24"><path d="M2 7L7 3H21L17 7Z" fill="url(#g-face)" /><use href="#i-wire" /></symbol>
      <symbol id="i-v-front" viewBox="0 0 24 24"><use href="#i-wire" /><path d="M3 8H17V21H3Z" fill="url(#g-face)" /></symbol>
      <symbol id="i-v-left" viewBox="0 0 24 24"><path d="M2 7L7 3V17L2 21Z" fill="url(#g-face)" /><use href="#i-wire" /></symbol>
      <symbol id="i-v-back" viewBox="0 0 24 24"><path d="M7 3H21V17H7Z" fill="url(#g-face)" /><use href="#i-wire" /></symbol>
      <symbol id="i-v-right" viewBox="0 0 24 24"><path d="M17 7L21 3V17L17 21Z" fill="url(#g-face)" /><use href="#i-wire" /></symbol>
      <symbol id="i-v-bottom" viewBox="0 0 24 24"><path d="M2 21L7 16H21L17 21Z" fill="url(#g-face)" /><use href="#i-wire" /></symbol>
      <symbol id="i-box" viewBox="0 0 24 24"><path d="M12 0L23 5V18L12 24L1 18V5Z" fill="#f79253" /><path d="M12 11V24L1 18V5Z" fill="#e57f3d" /><path d="M12 0L23 5L12 11L1 5Z" fill="#fba66f" /></symbol>
      <symbol id="i-stereo" viewBox="0 0 24 24"><rect x=".5" y=".5" width="23" height="23" rx="2" fill="#e9eef1" stroke="#a3b1ba" /><circle cx="7.500" cy="12" r="4" fill="#3f69b8" /><circle cx="16.500" cy="12" r="4" fill="#f02f8e" /></symbol>
      <symbol id="i-float" viewBox="0 0 10 10"><path d="M3 3.500V1H9V6H7M3 1.500H9M1 4H7V9H1ZM1 4.500H7" fill="none" stroke="#000" stroke-width="1.200" /></symbol>
      <symbol id="i-x" viewBox="0 0 10 10"><path d="M1.500 1.500L8.500 8.500M8.500 1.500L1.500 8.500" stroke="#000" stroke-width="1.600" /></symbol>

      <symbol id="i-wps" viewBox="0 0 24 24"><path d="M0 2H24L23 6H18L17 4H2Z" fill="#e8211c" /><path d="M2 3L7.500 20L13 6" fill="none" stroke="#e8211c" stroke-width="4" stroke-linejoin="bevel" /><path d="M11 7L16 20L22 3" fill="none" stroke="#ff5a28" stroke-width="4" stroke-linejoin="bevel" /></symbol>
      <symbol id="i-cc" viewBox="0 0 24 24"><path d="M0 0H24V24H0Z" fill="#c9c9cd" /><g fill="none" stroke="#15659c" stroke-width="2.400"><path d="M14 6A6.500 7 0 1 0 14 18" /><path d="M21 8A6.500 7 0 1 0 21 16M21 4V8M21 16V20" /></g></symbol>
      <symbol id="i-chrome" viewBox="0 0 24 24"><circle cx="12" cy="12" r="11" fill="#fbc116" /><path d="M12 12L2.500 6.500A11 11 0 0 1 21.500 6.500H12Z" fill="#e33b2e" /><path d="M2.500 6.500A11 11 0 0 0 11 23L16 14.500L12 12L7.200 14.500Z" fill="#2da94f" /><circle cx="12" cy="12" r="5.500" fill="#fff" /><circle cx="12" cy="12" r="4.300" fill="#3b7ded" /></symbol>
      <symbol id="i-explorer" viewBox="0 0 24 24"><path d="M1 3H9L11 5H23V21H1Z" fill="#e8a33a" /><path d="M1 6H23V21H1Z" fill="#fcd667" /><path d="M5 22V14Q5 12 7 12H17Q19 12 19 14V22H15V17H9V22Z" fill="#3f9be0" /></symbol>
      <symbol id="i-kd" viewBox="0 0 24 24"><use href="#i-rock" /></symbol>
      <symbol id="i-fm" viewBox="0 0 24 24"><use href="#i-rock" /></symbol>
      <symbol id="i-edl" viewBox="0 0 24 24"><use href="#i-shade" /></symbol>
      <symbol id="i-ssao" viewBox="0 0 24 24"><use href="#i-shade" /></symbol>
      <symbol id="i-front" viewBox="0 0 24 24"><use href="#i-box" /></symbol>
      <symbol id="i-back" viewBox="0 0 24 24"><use href="#i-box" /></symbol>
    </svg>

    <header class="titlebar">
      <svg class="mark"><use href="#i-ccmark" /></svg>
      <span class="title">CloudCompare v2.6.3 [64 bits] - [3D View 1]</span>
      <div class="winbtns">
        <button aria-label="Minimize"><svg width="12" height="12"><path d="M1 6.500H11" stroke="#000" /></svg></button>
        <button aria-label="Restore"><svg width="12" height="12"><path d="M1.500 3.500H8.500V10.500H1.500ZM3.500 3V1.500H10.500V8.500H9" fill="none" stroke="#000" /></svg></button>
        <button aria-label="Close"><svg width="12" height="12"><path d="M1 1L11 11M11 1L1 11" stroke="#000" /></svg></button>
      </div>
    </header>

    <nav class="menubar">
      <svg class="mark"><use href="#i-ccmark" /></svg>
      <div v-for="m in menus" :key="m.rest" class="menu" :class="{ open: m.rest === 'Edit' }">
        <button>{{ m.before }}<u v-if="m.key">{{ m.key }}</u>{{ m.rest }}</button>
        <ul v-if="m.rest === 'Edit'" class="dropdown">
          <template v-for="(e, i) in editMenu" :key="i">
            <li v-if="!e.label" class="sep"></li>
            <li v-else>
              <button :class="{ tall: e.icon, active: e.active }">
                <span class="slot"><svg v-if="e.icon" width="18" height="18"><use :href="'#i-' + e.icon" /></svg></span>
                <span class="label">{{ e.label }}</span>
                <span v-if="e.shortcut" class="short">{{ e.shortcut }}</span>
                <svg v-if="e.submenu" class="tri" width="4" height="8"><path d="M0 0L4 4L0 8Z" /></svg>
              </button>
            </li>
          </template>
        </ul>
      </div>
      <div class="mdibtns">
        <button aria-label="Minimize view"><svg width="10" height="10"><path d="M2 8H8" stroke="#70849a" stroke-width="2" /></svg></button>
        <button aria-label="Restore view"><svg width="10" height="10"><path d="M3 4V2H9V7H7M1 5H7V9H1Z" fill="none" stroke="#70849a" stroke-width="1.400" /></svg></button>
        <button aria-label="Close view"><svg width="10" height="10"><path d="M2 2L8 8M8 2L2 8" stroke="#5f7286" stroke-width="2.200" /></svg></button>
      </div>
    </nav>

    <div class="toolbar">
      <div v-for="(g, gi) in toolGroups" :key="gi" class="group">
        <i class="grip"></i>
        <template v-for="(t, ti) in g" :key="ti">
          <i v-if="t.separator" class="vsep"></i>
          <button v-else-if="t.text" class="textbtn">{{ t.text }}</button>
          <button v-else class="tool" :aria-label="t.icon">
            <svg>
              <use :href="'#i-' + t.icon" />
              <text v-for="c in captions[t.icon ?? ''] ?? []" :key="c.t" :x="c.x" :y="c.y" :fill="c.color" :font-size="c.size" :class="c.kind">{{ c.t }}</text>
            </svg>
          </button>
        </template>
        <button v-if="gi === toolGroups.length - 1" class="more" aria-label="More tools"><svg width="10" height="8"><path d="M1 1L4 4L1 7M6 1L9 4L6 7" fill="none" stroke="#000" stroke-width="1.600" /></svg></button>
      </div>
    </div>

    <div class="body">
      <aside class="side">
        <i class="hgrip"></i>
        <button v-for="s in sideTools" :key="s" :aria-label="s">
          <svg>
            <use :href="'#i-' + s" />
            <text v-for="c in captions[s] ?? []" :key="c.t" :x="c.x" :y="c.y" :fill="c.color" :font-size="c.size" :class="c.kind">{{ c.t }}</text>
          </svg>
        </button>
      </aside>
      <div class="work">
        <div class="upper">
          <section class="dock">
            <h2 class="docktitle">DB Tree</h2>
            <div class="tree"></div>
            <div class="camlink">
              <input id="camlink" type="checkbox" />
              <label for="camlink">Camera Link</label>
            </div>
            <h2 class="docktitle">Properties<button aria-label="Float properties"><svg><use href="#i-float" /></svg></button></h2>
            <div class="propbox"></div>
          </section>
          <main class="view">
            <svg class="scene">
              <g transform="translate(-313 -80)" shape-rendering="crispEdges">
                <path d="M613 80h1v800h-1zM745 80h1v800h-1zM1619 80h1v800h-1zM1625 80h1v800h-1z" fill="#ffff20" />
                <path :d="cloud" fill="#141414" />
                <path d="M1106 478h20v1h-20zM1116 469h1v20h-1z" fill="#dfe6ea" />
                <path d="M1469 846h380v1h-380zM1469 844h1v6h-1zM1849 844h1v6h-1z" fill="#fff" />
                <path d="M1884 822h2v25h-2z" fill="#0f0" />
                <path d="M1885 846h25v2h-25z" fill="#f00" />
              </g>
              <text x="1340" y="786" class="scale">50</text>
            </svg>
            <div class="psize">
              <span>default point size</span>
              <button aria-label="Decrease"><svg width="16" height="16"><path d="M1 6H15V9H1Z" fill="#8ac926" stroke="#4c6e2b" /></svg></button>
              <i></i>
              <button aria-label="Increase"><svg width="16" height="16"><path d="M6 1H9V6H14V9H9V14H6V9H1V6H6Z" fill="#8ac926" stroke="#4c6e2b" /></svg></button>
            </div>
          </main>
        </div>
        <section class="console">
          <h2 class="docktitle">Console
            <span><button aria-label="Float console"><svg><use href="#i-float" /></svg></button>
              <button aria-label="Close console"><svg><use href="#i-x" /></svg></button></span>
          </h2>
          <div class="logbox">
            <ul>
              <li v-for="l in logs" :key="l">{{ l }}</li>
            </ul>
            <div class="scroll">
              <svg width="10" height="8"><path d="M1 6L5 2L9 6" /></svg>
              <i></i>
              <svg width="10" height="8"><path d="M1 2L5 6L9 2" /></svg>
            </div>
          </div>
        </section>
      </div>
    </div>

    <footer class="taskbar">
      <button class="start" aria-label="Start"><svg width="16" height="16"><path d="M0 2L7 1V7.500H0ZM8 1L16 0V7.500H8ZM0 8.500H7V15L0 14ZM8 8.500H16V16L8 15Z" fill="#fff" /></svg></button>
      <div class="search">
        <svg width="18" height="18"><circle cx="11" cy="6.500" r="5.500" /><path d="M7 10.500L1 17" /></svg>
        <input type="text" aria-label="Search" placeholder="在这里输入你要搜索的内容" />
      </div>
      <div class="apps">
        <button v-for="a in apps" :key="a" :class="{ current: a === 'cc' }" :aria-label="a"><svg><use :href="'#i-' + a" /></svg></button>
      </div>
      <div class="tray">
        <svg width="12" height="16"><path d="M1 11L6 5L11 11" /></svg>
        <svg width="14" height="16"><path d="M1 14A13 13 0 0 1 13 3M4 14A10 10 0 0 1 13 6M7 14A7 7 0 0 1 13 9M10 14A4 4 0 0 1 13 12" /></svg>
        <svg width="16" height="16"><path d="M1 6H3L7 2V14L3 10H1ZM10 5L15 10M15 5L10 10" /></svg>
        <span class="ime">中</span>
        <svg width="18" height="18"><path d="M2 2L16 1L17 15L3 17Z" fill="#f5481d" stroke="none" /><path d="M14 5Q5 3 6 7Q13 9 13 11Q12 15 4 13" stroke="#fff" stroke-width="2.600" /></svg>
        <div class="clock"><span>12:05</span><span>2022/5/9</span></div>
      </div>
    </footer>

    <svg class="notes" aria-hidden="true">
      <path d="M34 14H108V62H34ZM52 204H180V243H52Z" fill="none" stroke="#c01c04" stroke-width="2.600" />
      <path d="M101 88L106 86L127 159L134 158L130 183L113 163L119 162Z" fill="#c01c04" />
    </svg>
    <div class="watermark">CSDN @伐尘</div>
  </div>
</template>

<style>
body {
  background: #f0f0f0;
}
</style>

<style scoped>
.desktop {
  position: relative;
  display: flex;
  flex-direction: column;
  min-height: 100vh;
  overflow: hidden;
  background: #f0f0f0;
  color: #000;
  font-family: "Open Sans", "Noto Sans CJK SC", sans-serif;
  font-size: 13px;
  line-height: 18px;
}
.desktop * {
  box-sizing: border-box;
}
.defs {
  position: absolute;
  width: 0;
  height: 0;
}
button {
  padding: 0;
  border: 0;
  background: none;
  color: inherit;
  font: inherit;
}
svg {
  display: block;
  flex: none;
}
.mark {
  width: 16px;
  height: 16px;
}
.titlebar {
  display: flex;
  align-items: center;
  height: 23px;
  padding-left: 2px;
  background: #fff;
}
.title {
  margin-left: 4px;
}
.winbtns {
  display: flex;
  margin-left: auto;
  padding-right: 2px;
}
.winbtns button {
  display: grid;
  place-items: center;
  width: 46px;
  height: 20px;
}
.menubar {
  display: flex;
  height: 23px;
  background: #fff;
  border-bottom: 1px solid #e8e8e8;
}
.menubar .mark {
  margin-top: 3px;
}
.menu {
  position: relative;
}
.menu > button {
  height: 22px;
  padding: 0 7px 2px;
  white-space: nowrap;
}
.menu.open > button {
  background: #cce8ff;
  box-shadow: inset 0 0 0 1px #a9d6fb;
}
.dropdown {
  position: absolute;
  z-index: 5;
  left: 0;
  top: 22px;
  width: 254px;
  margin: 0;
  padding: 2px 3px;
  list-style: none;
  background: #f0f0f0;
  border: 1px solid #ccc;
}
.dropdown button {
  display: flex;
  align-items: center;
  width: 100%;
  height: 22px;
  padding-bottom: 2px;
  text-align: left;
}
.dropdown button.tall {
  height: 23px;
}
.dropdown button.active {
  background: #91c9f7;
}
.slot {
  width: 32px;
}
.label {
  flex: 1;
}
.short {
  width: 51px;
}
.tri {
  margin-right: 11px;
}
.sep {
  height: 9px;
  margin-left: 27px;
  border-top: 4px solid #f0f0f0;
  background: linear-gradient(#d0d0d0 1px, transparent 1px);
}
.mdibtns {
  display: flex;
  gap: 1px;
  margin-left: auto;
  padding: 1px 0 3px;
}
.mdibtns button {
  display: grid;
  place-items: center;
  width: 17px;
  border: 1px solid #e0e0e0;
}
.toolbar {
  display: flex;
  height: 34px;
  border-bottom: 1px solid #bdbdbd;
  overflow: hidden;
}
.group {
  display: flex;
  flex: none;
  align-items: center;
  padding-right: 1px;
  border-right: 1px solid #b4b4b4;
}
.group:last-child {
  flex: 1;
  border: 0;
}
.grip {
  width: 3px;
  height: 26px;
  margin: 0 2px 0 4px;
  background: repeating-linear-gradient(#b0b0b0 0 2px, transparent 2px 4px);
}
.tool {
  display: grid;
  place-items: center;
  width: 31px;
  height: 31px;
}
.tool svg,
.side button svg {
  width: 24px;
  height: 24px;
  overflow: visible;
}
.tool text,
.side text {
  font-family: "Liberation Sans", sans-serif;
  font-weight: bold;
  text-anchor: middle;
}
.tool text.thin {
  font-weight: normal;
}
.tool text.mono {
  font-family: "DejaVu Sans Mono", monospace;
  font-weight: normal;
}
.tool text.serif,
.side text.serif {
  font-family: "Liberation Serif", serif;
}
.vsep {
  width: 1px;
  height: 24px;
  margin: 0 2px 0 3px;
  background: #cdcdcd;
}
.textbtn {
  padding: 2px 11px 0;
  font-family: "Liberation Mono", monospace;
  font-size: 10px;
}
.more {
  margin-left: auto;
  margin-right: 2px;
}
.body {
  display: flex;
  flex: 1;
  padding-bottom: 22px;
}
.side {
  display: flex;
  flex-direction: column;
  align-items: center;
  width: 35px;
  border-right: 1px solid #b4b4b4;
  border-bottom: 1px solid #b4b4b4;
}
.hgrip {
  width: 26px;
  height: 2px;
  margin: 4px 0;
  background: repeating-linear-gradient(90deg, #b0b0b0 0 2px, transparent 2px 4px);
}
.side button {
  display: grid;
  place-items: center;
  height: 30px;
}
.work {
  display: flex;
  flex: 1;
  flex-direction: column;
  min-width: 0;
}
.upper {
  display: flex;
  flex: 1;
}
.dock {
  display: flex;
  flex-direction: column;
  width: 278px;
  padding: 1px 4px 8px 0;
}
.docktitle {
  display: flex;
  align-items: center;
  justify-content: space-between;
  height: 20px;
  margin: 0;
  padding: 2px 3px 0 0;
  border: 1px solid #b8b8b8;
  background: #dadada;
  font-family: "Liberation Mono", monospace;
  font-size: 10px;
  font-weight: normal;
}
.docktitle svg {
  width: 10px;
  height: 10px;
}
.docktitle span {
  display: flex;
  gap: 6px;
}
.tree,
.propbox {
  margin: 10px 9px 0;
  border: 1px solid #828790;
}
.tree {
  flex: 383 1 0;
  background: #fff;
}
.propbox {
  flex: 297 1 0;
  border-top: 0;
}
.camlink {
  display: flex;
  align-items: center;
  justify-content: flex-end;
  gap: 4px;
  height: 27px;
  margin: 6px 9px 15px;
  padding-right: 6px;
  border: 1px solid #dcdcdc;
  font-family: "Liberation Mono", monospace;
  font-size: 10px;
}
.camlink label {
  padding-top: 2px;
}
.camlink input {
  appearance: none;
  width: 13px;
  height: 13px;
  margin: 0;
  border: 1px solid #333;
  background: #fff;
}
.view {
  position: relative;
  flex: 1;
  min-width: 0;
  background: linear-gradient(#0a6697, #000);
}
.scene {
  position: absolute;
  inset: 0;
  width: 100%;
  height: 100%;
}
.scale {
  fill: #fff;
  font-family: "Noto Sans", sans-serif;
  font-size: 12px;
}
.psize {
  position: absolute;
  left: 8px;
  top: 8px;
  display: flex;
  align-items: center;
  width: 242px;
  height: 33px;
  padding: 0 8px;
  background: #6b7981;
  color: #86c220;
  font-family: "Liberation Mono", monospace;
  font-size: 15px;
  font-weight: bold;
}
.psize span {
  flex: 1;
  padding-top: 2px;
}
.psize i {
  width: 1px;
  height: 1px;
  margin: 0 8px;
  background: #8cc828;
}
.console {
  padding: 5px 0 8px;
}
.logbox {
  display: flex;
  height: 98px;
  margin: 10px 9px 0;
  padding: 1px;
  border: 1px solid #828790;
  background: #fff;
}
.logbox ul {
  flex: 1;
  margin: 0;
  padding: 0;
  list-style: none;
}
.logbox li {
  height: 19px;
  padding-left: 3px;
  line-height: 19px;
}
.logbox li:nth-child(odd) {
  background: #f5f5f5;
}
.scroll {
  display: flex;
  flex-direction: column;
  align-items: center;
  width: 17px;
  padding: 5px 0 4px;
  background: #f0f0f0;
}
.scroll path {
  fill: none;
  stroke: #555;
  stroke-width: 2;
}
.scroll i {
  width: 15px;
  height: 18px;
  margin: auto 0 5px;
  background: #cdcdcd;
}
.taskbar {
  display: flex;
  height: 40px;
  background: linear-gradient(90deg, #22222f 0, #2b2b36 26%, #39343f 40%, #33333c 60%, #3b3b3d 74%, #262840 82%, #23253f 86%, #302b36 93%, #262431);
  color: #fff;
}
.start {
  display: grid;
  place-items: center;
  width: 48px;
}
.search {
  display: flex;
  align-items: center;
  gap: 10px;
  width: 344px;
  padding-left: 11px;
  border: 1px solid #c4c4c4;
  background: #f2f2f2;
}
.search svg {
  fill: none;
  stroke: #222;
  stroke-width: 1.400;
}
.search input {
  flex: 1;
  padding: 0;
  border: 0;
  outline: 0;
  background: none;
  font-family: "Noto Sans CJK SC", sans-serif;
  font-size: 14px;
}
.search input::placeholder {
  color: #333;
}
.apps {
  display: flex;
  gap: 1px;
  padding-left: 3px;
}
.apps button {
  display: grid;
  place-items: center;
  width: 48px;
  background: linear-gradient(#76b9ed, #76b9ed) center bottom / 40px 2px no-repeat;
}
.apps button.current {
  background: linear-gradient(#76b9ed, #76b9ed) center bottom / 48px 2px no-repeat #5a5964;
}
.apps svg {
  width: 24px;
  height: 24px;
}
.tray {
  display: flex;
  align-items: center;
  margin-left: auto;
  gap: 11px;
  margin-right: 4px;
  padding-right: 11px;
  border-right: 1px solid #777;
}
.tray svg {
  fill: none;
  stroke: #fff;
  stroke-width: 1.300;
}
.ime {
  font-size: 14px;
  line-height: 20px;
}
.clock {
  display: flex;
  flex-direction: column;
  align-items: center;
  margin-left: 11px;
  font-size: 12px;
  line-height: 19px;
}
.notes {
  position: absolute;
  z-index: 8;
  left: 0;
  top: 0;
  width: 200px;
  height: 260px;
  pointer-events: none;
}
.watermark {
  position: absolute;
  z-index: 9;
  right: 4px;
  bottom: 9px;
  color: rgba(215, 215, 218, 0.8);
  font-family: "Liberation Sans", "Noto Sans CJK SC", sans-serif;
  font-size: 35px;
  font-weight: 300;
  line-height: 46px;
  text-shadow: 1px 1px 1px rgba(90, 90, 90, 0.6);
  pointer-events: none;
}
</style>
